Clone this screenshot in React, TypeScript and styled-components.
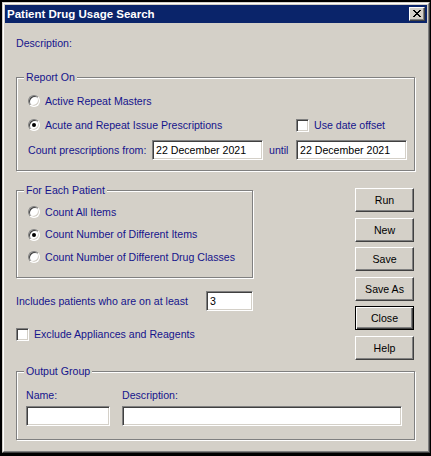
import React from "react";
import styled, { createGlobalStyle } from "styled-components";

const GlobalStyle = createGlobalStyle`
  html, body {
    margin: 0;
    padding: 0;
    background: #000;
  }
  * {
    box-sizing: border-box;
  }
`;

const NAVY = "#14148c";
const FACE = "#d4d0c8";

const Screen = styled.div`
  width: 431px;
  height: 456px;
  background: #000;
  padding: 2px 2px 3px 2px;
  display: flex;
  font-family: "Liberation Sans", Arial, sans-serif;
  font-size: 10.6px;
`;

const Window = styled.div`
  flex: 1;
  display: flex;
  flex-direction: column;
  border: 1px solid;
  border-color: ${FACE} #404040 #404040 ${FACE};
`;

const Frame = styled.div`
  flex: 1;
  display: flex;
  flex-direction: column;
  border: 1px solid;
  border-color: #fff #808080 #808080 #fff;
  padding: 1px;
  background: ${FACE};
`;

const TitleBar = styled.div`
  height: 18px;
  display: flex;
  align-items: center;
  justify-content: space-between;
  background: #0a246a;
  padding: 0 2px;
`;

const Title = styled.span`
  color: #fff;
  font-weight: bold;
  font-size: 11.5px;
  line-height: 18px;
`;

const CloseBox = styled.div`
  width: 16px;
  height: 14px;
  display: flex;
  align-items: center;
  justify-content: center;
  background: ${FACE};
  border: 1px solid;
  border-color: #fff #404040 #404040 #fff;
  box-shadow: inset -1px -1px 0 #808080;
  padding-bottom: 1px;
`;

const Body = styled.div`
  display: flex;
  flex-direction: column;
  padding: 0 12px 0 11px;
`;

const Text = styled.span<{ $w?: number }>`
  color: ${NAVY};
  line-height: 13px;
  white-space: nowrap;
  ${(p) => (p.$w ? `width: ${p.$w}px; flex-shrink: 0;` : "")}
`;

const Description = styled(Text)`
  margin-top: 14px;
`;

const Group = styled.div<{ $top: number }>`
  position: relative;
  margin-top: ${(p) => p.$top}px;
  border: 1px solid #808080;
  box-shadow: 1px 1px 0 #fff, inset 1px 1px 0 #fff;
  display: flex;
  flex-direction: column;
`;

const Caption = styled.span`
  position: absolute;
  top: -7px;
  left: 7px;
  padding: 0 2px;
  background: ${FACE};
  color: ${NAVY};
  line-height: 13px;
  white-space: nowrap;
`;

const ReportBody = styled.div`
  display: flex;
  flex-direction: column;
  padding: 15px 7px 10px 11px;
`;

const PatientBody = styled.div`
  display: flex;
  flex-direction: column;
  gap: 6.5px;
  padding: 13px 8px 12px 11px;
`;

const OutputBody = styled.div`
  display: flex;
  padding: 17px 12px 13px 9px;
  gap: 12px;
`;

const Row = styled.div<{ $top?: number }>`
  display: flex;
  align-items: center;
  margin-top: ${(p) => p.$top ?? 0}px;
`;

const OptionRow = styled.label`
  display: flex;
  align-items: center;
  gap: 5px;
  height: 16px;
  flex-shrink: 0;
`;

const CheckRow = styled.label<{ $width?: number; $top?: number }>`
  display: flex;
  align-items: center;
  gap: 5px;
  height: 13px;
  flex-shrink: 0;
  margin-top: ${(p) => p.$top ?? 0}px;
  ${(p) => (p.$width ? `width: ${p.$width}px; margin-left: auto;` : "")}
`;

const Radio = styled.span<{ $checked?: boolean }>`
  position: relative;
  width: 12px;
  height: 12px;
  flex-shrink: 0;
  border-radius: 50%;
  background: #fff;
  border: 1px solid;
  border-color: #808080 #fff #fff #808080;
  box-shadow: inset 1px 1px 0 #404040, inset -1px -1px 0 ${FACE};
  &::after {
    content: "";
    display: ${(p) => (p.$checked ? "block" : "none")};
    position: absolute;
    left: 3px;
    top: 3px;
    width: 4px;
    height: 4px;
    border-radius: 50%;
    background: #000;
  }
`;

const CheckBox = styled.span`
  width: 13px;
  height: 13px;
  flex-shrink: 0;
  background: #fff;
  border: 1px solid;
  border-color: #808080 #fff #fff #808080;
  box-shadow: inset 1px 1px 0 #404040, inset -1px -1px 0 ${FACE};
`;

const Field = styled.input<{ $width?: number; $push?: boolean }>`
  width: ${(p) => (p.$width ? `${p.$width}px` : "100%")};
  height: 20px;
  flex-shrink: 0;
  margin: 0;
  margin-left: ${(p) => (p.$push ? "auto" : "0")};
  padding: 0 0 0 3px;
  background: #fff;
  border: 1px solid;
  border-color: #808080 #fff #fff #808080;
  box-shadow: inset 1px 1px 0 #404040, inset -1px -1px 0 ${FACE};
  font-family: "Liberation Sans", Arial, sans-serif;
  font-size: 10.6px;
  color: #000;
  outline: none;
`;

const Until = styled(Text)`
  width: 33px;
  padding-left: 6px;
  flex-shrink: 0;
`;

const Middle = styled.div`
  display: flex;
  align-items: flex-start;
  margin-top: 17px;
`;

const LeftCol = styled.div`
  width: 237px;
  margin-top: 2px;
  display: flex;
  flex-direction: column;
`;

const ButtonCol = styled.div`
  margin-left: auto;
  margin-right: 1px;
  width: 59px;
  display: flex;
  flex-direction: column;
  gap: 5.6px;
`;

const Button = styled.button<{ $default?: boolean }>`
  height: 24px;
  margin: 0;
  padding: 0;
  background: ${FACE};
  color: #000;
  font-family: "Liberation Sans", Arial, sans-serif;
  font-size: 10.6px;
  border: 1px solid;
  ${(p) =>
    p.$default
      ? `border-color: #000;
         box-shadow: inset 1px 1px 0 #fff, inset -1px -1px 0 #404040, inset -2px -2px 0 #808080;`
      : `border-color: #fff #404040 #404040 #fff;
         box-shadow: inset -1px -1px 0 #808080;`}
`;

const Column = styled.div<{ $width?: number }>`
  display: flex;
  flex-direction: column;
  gap: 4px;
  ${(p) => (p.$width ? `width: ${p.$width}px; flex-shrink: 0;` : "flex: 1;")}
`;

const CloseGlyph = () => (
  <svg width="8" height="7" viewBox="0 0 8 7" shapeRendering="crispEdges">
    <path
      d="M0 0h2v1H0zM6 0h2v1H6zM1 1h2v1H1zM5 1h2v1H5zM2 2h4v1H2zM3 3h2v1H3zM2 4h4v1H2zM1 5h2v1H1zM5 5h2v1H5zM0 6h2v1H0zM6 6h2v1H6z"
      fill="#000"
    />
  </svg>
);

const buttons = ["Run", "New", "Save", "Save As", "Close", "Help"];

export default function App() {
  return (
    <>
      <GlobalStyle />
      <Screen>
        <Window>
          <Frame>
            <TitleBar>
              <Title>Patient Drug Usage Search</Title>
              <CloseBox>
                <CloseGlyph />
              </CloseBox>
            </TitleBar>
            <Body>
              <Description>Description:</Description>

              <Group $top={27}>
                <Caption>Report On</Caption>
                <ReportBody>
                  <Row>
                    <OptionRow>
                      <Radio />
                      <Text>Active Repeat Masters</Text>
                    </OptionRow>
                  </Row>
                  <Row $top={8}>
                    <OptionRow>
                      <Radio $checked />
                      <Text>Acute and Repeat Issue Prescriptions</Text>
                    </OptionRow>
                    <CheckRow $width={111}>
                      <CheckBox />
                      <Text>Use date offset</Text>
                    </CheckRow>
                  </Row>
                  <Row $top={7}>
                    <Text $w={124}>Count prescriptions from:</Text>
                    <Field $width={111} defaultValue="22 December 2021" />
                    <Until>until</Until>
                    <Field $width={111} defaultValue="22 December 2021" />
                  </Row>
                </ReportBody>
              </Group>

              <Middle>
                <LeftCol>
                  <Group $top={0}>
                    <Caption>For Each Patient</Caption>
                    <PatientBody>
                      <OptionRow>
                        <Radio />
                        <Text>Count All Items</Text>
                      </OptionRow>
                      <OptionRow>
                        <Radio $checked />
                        <Text>Count Number of Different Items</Text>
                      </OptionRow>
                      <OptionRow>
                        <Radio />
                        <Text>Count Number of Different Drug Classes</Text>
                      </OptionRow>
                    </PatientBody>
                  </Group>
                  <Row $top={13}>
                    <Text>Includes patients who are on at least</Text>
                    <Field $width={47} $push defaultValue="3" />
                  </Row>
                  <CheckRow $top={17}>
                    <CheckBox />
                    <Text>Exclude Appliances and Reagents</Text>
                  </CheckRow>
                </LeftCol>
                <ButtonCol>
                  {buttons.map((b) => (
                    <Button key={b} $default={b === "Close"}>
                      {b}
                    </Button>
                  ))}
                </ButtonCol>
              </Middle>

              <Group $top={11}>
                <Caption>Output Group</Caption>
                <OutputBody>
                  <Column $width={84}>
                    <Text>Name:</Text>
                    <Field />
                  </Column>
                  <Column>
                    <Text>Description:</Text>
                    <Field />
                  </Column>
                </OutputBody>
              </Group>
            </Body>
          </Frame>
        </Window>
      </Screen>
    </>
  );
}
